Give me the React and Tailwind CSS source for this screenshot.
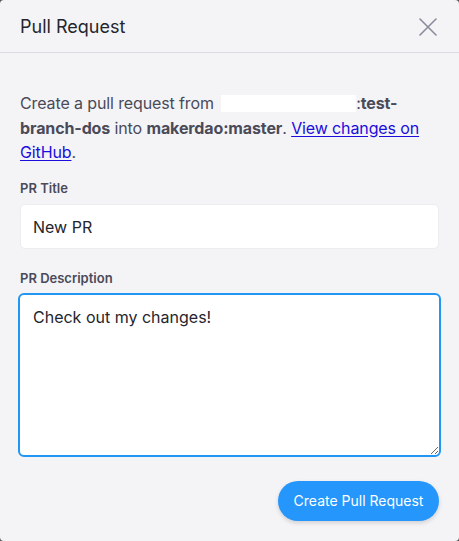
import React, { useState } from 'react';

function CloseIcon() {
  return (
    <svg width="18" height="18" viewBox="0 0 18 18" fill="none">
      <path d="M1 1L17 17M17 1L1 17" stroke="#8b8b9c" strokeWidth="1.6" strokeLinecap="round" />
    </svg>
  );
}

export default function App() {
  const [title, setTitle] = useState('New PR');
  const [desc, setDesc] = useState('Check out my changes!');

  return (
    <div className="w-[459px] h-[541px] bg-[#555] font-['Inter',sans-serif]">
      <div className="w-full h-full bg-[#f4f4f7] rounded-[4px] flex flex-col">
        <div className="h-[53px] shrink-0 flex items-center justify-between pl-5 pr-[22px] border-b border-[#dcdce6]">
          <h2 className="text-[18px] text-[#25252d] pt-[1px]">Pull Request</h2>
          <button className="p-0 mt-[1px]">
            <CloseIcon />
          </button>
        </div>

        <div className="flex-1 flex flex-col px-5 pt-[38px]">
          <p className="text-[16px] leading-[24.5px] text-[#4a4a59] tracking-[-0.12px]">
            Create a pull request from{' '}
            <span className="inline-block align-[-3px] ml-[3px] w-[135px] h-[17px] bg-white" />
            :<span className="font-bold">test-branch-dos</span> into{' '}
            <span className="font-bold">makerdao:master</span>.{' '}
            <a href="#" className="text-[#1a0dde] underline underline-offset-2">
              View changes on GitHub
            </a>
            .
          </p>

          <label className="mt-[14px] text-[13px] font-semibold text-[#4a4a59]">PR Title</label>
          <input
            value={title}
            onChange={(e) => setTitle(e.target.value)}
            className="mt-[6px] h-[45px] w-full bg-white rounded-[5px] border border-[#ececf1] px-3 text-[16px] text-[#25252d] outline-none"
          />

          <label className="mt-[20px] text-[13px] font-semibold text-[#4a4a59]">PR Description</label>
          <textarea
            value={desc}
            onChange={(e) => setDesc(e.target.value)}
            className="mt-[4px] -mx-[2px] h-[164px] bg-white rounded-[6px] border-2 border-[#2196f3] px-[13px] pt-[10px] text-[16px] leading-[24px] text-[#25252d] outline-none resize-y"
          />

          <div className="flex justify-end mt-[24px]">
            <button className="h-[40px] w-[161px] rounded-full bg-[#2496fc] text-white text-[14px] shadow-[0_2px_4px_rgba(0,0,0,0.15)]">
              Create Pull Request
            </button>
          </div>
        </div>
      </div>
    </div>
  );
}
